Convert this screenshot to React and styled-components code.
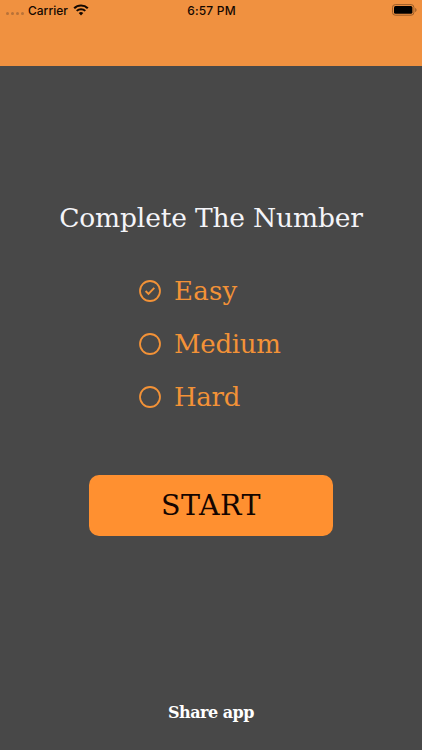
import React, { useState } from "react";
import styled, { createGlobalStyle } from "styled-components";

const levels = [
  { name: "Easy", spacing: "0.2px" },
  { name: "Medium", spacing: "-0.3px" },
  { name: "Hard", spacing: "-0.3px" },
];

const StatusBar = () => {
  return (
    <Status>
      <StatusGroup>
        <Dots>
          <i />
          <i />
          <i />
          <i />
        </Dots>
        <span>Carrier</span>
        <svg width="16" height="12" viewBox="0 0 16 12" fill="none" stroke="#140800">
          <path d="M1.2 4.3a9.7 9.7 0 0 1 13.6 0" strokeWidth="2.2" />
          <path d="M3.7 6.9a6.2 6.2 0 0 1 8.6 0" strokeWidth="2" />
          <path d="M8 11.4 5.7 9.1a3.3 3.3 0 0 1 4.6 0z" fill="#140800" stroke="none" />
        </svg>
      </StatusGroup>
      <Time>6:57 PM</Time>
      <BatteryWrap>
        <svg width="25" height="12" viewBox="0 0 25 12">
          <rect x="0.5" y="0.6" width="21.4" height="10.6" rx="2.8" fill="none" stroke="#9a5c28" />
          <rect x="2" y="2.1" width="18.4" height="7.6" rx="1.5" fill="#000" />
          <path d="M23.2 4v4c.8-.3 1.3-1.1 1.3-2s-.5-1.7-1.3-2z" fill="#9a5c28" />
        </svg>
      </BatteryWrap>
    </Status>
  );
};

const App = () => {
  const [level, setLevel] = useState("Easy");

  return (
    <Screen>
      <GlobalStyle />
      <Header>
        <StatusBar />
      </Header>
      <Title>Complete The Number</Title>
      <Levels>
        {levels.map(({ name, spacing }) => (
          <Level key={name} $spacing={spacing} onClick={() => setLevel(name)}>
            <svg width="22" height="22" viewBox="0 0 22 22" fill="none" stroke="#f39237">
              <circle cx="11" cy="11" r="10" strokeWidth="1.8" />
              {level === name && <path d="m6.6 11 2.9 2.9 5.8-6.1" strokeWidth="1.9" />}
            </svg>
            <span>{name}</span>
          </Level>
        ))}
      </Levels>
      <StartButton>START</StartButton>
      <ShareButton>Share app</ShareButton>
    </Screen>
  );
};

const GlobalStyle = createGlobalStyle`
  * {
    box-sizing: border-box;
  }
  body {
    margin: 0;
    background: #484848;
  }
  button {
    padding: 0;
    border: none;
    background: none;
    cursor: pointer;
  }
`;

const Screen = styled.div`
  display: flex;
  flex-direction: column;
  align-items: center;
  height: 750px;
  background: #484848;
  font-family: "DejaVu Serif", serif;
  overflow: hidden;
`;

const Header = styled.header`
  width: 100%;
  height: 65.5px;
  flex: none;
  background: #f09140;
`;

const Status = styled.div`
  display: grid;
  grid-template-columns: 1fr auto 1fr;
  align-items: center;
  height: 20px;
  padding: 0 5px 0 6px;
  color: #140800;
  font-family: Inter, "Liberation Sans", sans-serif;
  font-size: 12px;
  font-weight: 500;
`;

const StatusGroup = styled.div`
  display: flex;
  align-items: center;
  svg {
    margin-left: 5px;
  }
`;

const Dots = styled.div`
  display: flex;
  gap: 2px;
  margin: 7px 4px 0 0;
  i {
    width: 3px;
    height: 3px;
    border-radius: 50%;
    background: #b87238;
  }
`;

const Time = styled.span`
  letter-spacing: 0.2px;
`;

const BatteryWrap = styled.div`
  display: flex;
  justify-content: flex-end;
`;

const Title = styled.h1`
  margin: 134.5px 0 0;
  height: 36px;
  line-height: 36px;
  font-size: 26.5px;
  font-weight: 400;
  letter-spacing: -0.17px;
  white-space: nowrap;
  color: #f4f4f8;
`;

const Levels = styled.div`
  display: flex;
  flex-direction: column;
  width: 144px;
  margin-top: 28px;
`;

const Level = styled.button`
  display: flex;
  align-items: center;
  gap: 13px;
  height: 53px;
  color: #f39237;
  font-family: inherit;
  font-size: 26px;
  letter-spacing: ${(props) => props.$spacing};
  white-space: nowrap;
  svg {
    flex: none;
  }
`;

const StartButton = styled.button`
  flex: none;
  width: 244px;
  height: 61px;
  margin-top: 51.5px;
  padding-top: 1px;
  border-radius: 10px;
  background: #ff9030;
  color: #140500;
  font-family: inherit;
  font-size: 28.5px;
  letter-spacing: 0.5px;
`;

const ShareButton = styled.button`
  margin-top: auto;
  margin-bottom: 26px;
  height: 24px;
  color: #fff;
  font-family: inherit;
  font-size: 16px;
  font-weight: 700;
  letter-spacing: -0.5px;
  white-space: nowrap;
`;

export default App;
